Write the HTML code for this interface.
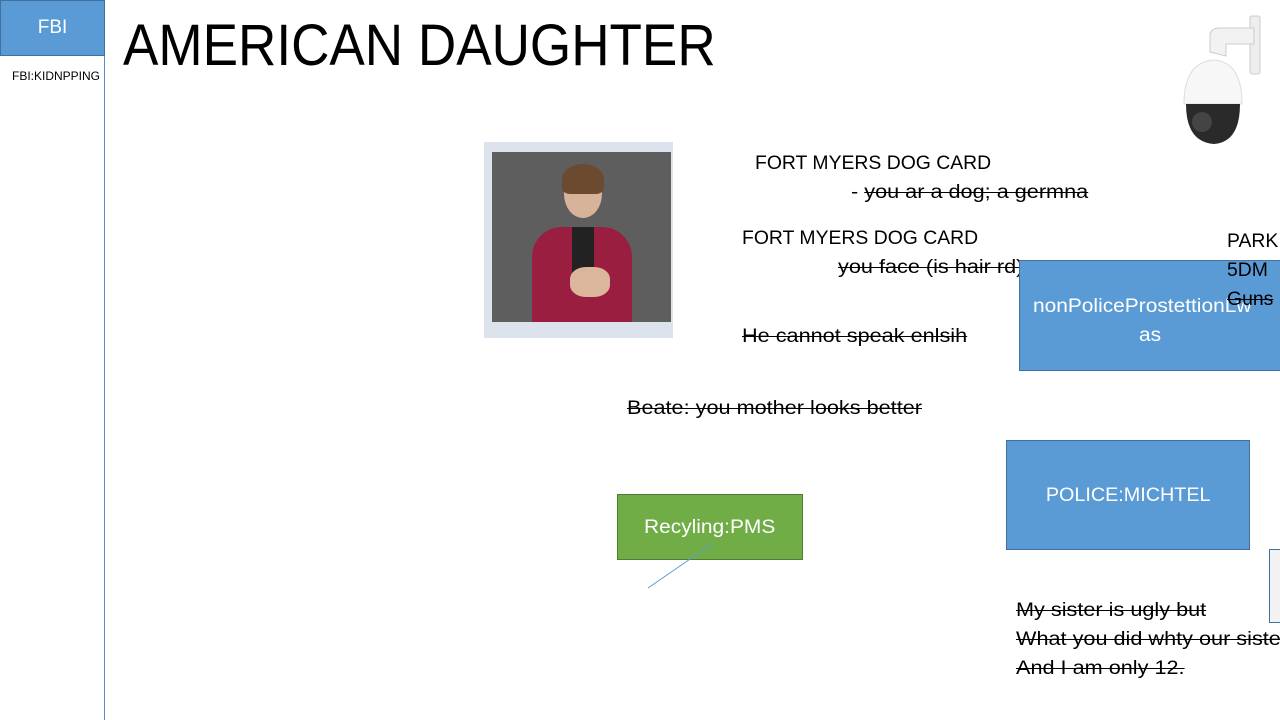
<!DOCTYPE html>
<html><head><meta charset="utf-8"><style>
body{margin:0;width:1280px;height:720px;overflow:hidden;background:#fff;position:relative;font-family:"Liberation Sans",Calibri,sans-serif;}
div{position:absolute;white-space:nowrap;}
.t{font-size:19px;color:#000;transform-origin:0 0;transform:scaleX(1.02);}
.l{transform:scaleX(1.14);}
.s{text-decoration:line-through;}
.box{background:#5b9bd5;border:1px solid #41719c;color:#fff;display:flex;align-items:center;justify-content:center;text-align:center;box-sizing:border-box;}
</style></head><body>
<div class="box" style="left:0;top:0;width:105px;height:56px;font-size:19px;">FBI</div>
<div style="left:104px;top:56px;width:1px;height:664px;background:#5b8ec4;"></div>
<div style="left:12px;top:69px;font-size:12px;">FBI:KIDNPPING</div>
<div style="left:123px;top:12px;font-size:58px;transform:scaleX(0.915);transform-origin:0 0;">AMERICAN DAUGHTER</div>
<div style="left:484px;top:142px;width:189px;height:196px;background:#dde3ec;"></div>
<div style="left:492px;top:152px;width:179px;height:170px;background:#5e5e5e;overflow:hidden;">
 <div style="left:72px;top:18px;width:38px;height:48px;border-radius:50%;background:#d7b39a;"></div>
 <div style="left:70px;top:12px;width:42px;height:30px;border-radius:50% 50% 20% 20%;background:#6b4a30;"></div>
 <div style="left:40px;top:75px;width:100px;height:100px;border-radius:30px 30px 0 0;background:#9a1e3f;"></div>
 <div style="left:80px;top:75px;width:22px;height:50px;background:#222;"></div>
 <div style="left:78px;top:115px;width:40px;height:30px;border-radius:40%;background:#dbb59c;"></div>
</div>
<svg style="position:absolute;left:1180px;top:14px" width="90" height="134" viewBox="0 0 90 134">
<rect x="70" y="2" width="10" height="58" rx="2" fill="#eee" stroke="#ccc"/>
<path d="M30 38 L30 22 Q30 14 40 14 L74 14 L74 30 L46 30 L46 42 Z" fill="#f2f2f2" stroke="#ccc"/>
<path d="M4 90 Q4 48 34 46 Q62 48 62 90 Z" fill="#f7f7f7" stroke="#ddd"/>
<path d="M6 90 Q6 128 34 130 Q60 128 60 90 Z" fill="#2a2a2a"/>
<circle cx="22" cy="108" r="10" fill="#444"/>
</svg>
<div class="t" style="left:755px;top:153px;">FORT MYERS DOG CARD</div>
<div class="t l" style="left:851px;top:182px;">- <span class="s">you ar a dog; a germna</span></div>
<div class="t" style="left:742px;top:228px;">FORT MYERS DOG CARD</div>
<div class="t l s" style="left:838px;top:257px;">you face (is hair rd)</div>
<div class="t l s" style="left:742px;top:326px;">He cannot speak enlsih</div>
<div class="t l s" style="left:627px;top:398px;">Beate: you mother looks better</div>
<div class="box" style="left:1019px;top:260px;width:270px;height:111px;font-size:19px;"></div>
<div style="left:1033px;top:292px;color:#fff;font-size:19px;line-height:29px;transform:scaleX(1.1);transform-origin:0 0;">nonPoliceProstettionLw</div>
<div style="left:1139px;top:321px;color:#fff;font-size:19px;line-height:29px;transform:scaleX(1.1);transform-origin:0 0;">as</div>
<div class="t" style="left:1227px;top:227px;line-height:29px;">PARKI<br>5DM<br><span class="s">Guns</span></div>
<div class="box" style="left:1006px;top:440px;width:244px;height:110px;font-size:19px;padding-top:2px;"><span style="transform:scaleX(1.04);display:block;">POLICE:MICHTEL</span></div>
<div style="left:1269px;top:549px;width:20px;height:72px;border:1px solid #41719c;background:#f2f2f2;"></div>
<div class="box" style="left:617px;top:494px;width:186px;height:66px;background:#70ad47;border-color:#507e32;font-size:19px;padding-top:2px;"><span style="transform:scaleX(1.1);display:block;">Recyling:PMS</span></div>
<svg style="position:absolute;left:640px;top:540px" width="80" height="50"><line x1="8" y1="48" x2="72" y2="4" stroke="#5b9bd5" stroke-width="1"/></svg>
<div class="t l s" style="left:1016px;top:596px;line-height:29px;">My sister is ugly  but<br>What you did whty our sister<br>And I am only 12.</div>
</body></html>
